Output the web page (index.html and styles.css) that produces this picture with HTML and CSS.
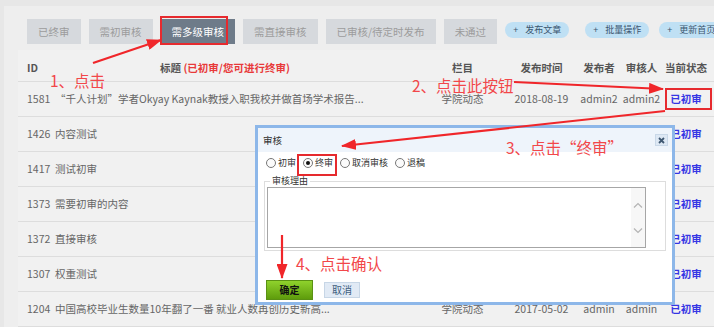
FILE: index.html
```html
<!DOCTYPE html>
<html lang="zh-CN">
<head>
  <meta charset="UTF-8">
  <meta name="viewport" content="width=device-width, initial-scale=1.0">
  <title>文章审核</title>
  <link rel="stylesheet" href="styles.css">
</head>
<body>

  <div class="panel">
    <div class="toolbar">
      <span class="tab">已终审</span>
      <span class="tab">需初审核</span>
      <span class="tab active">需多级审核</span>
      <span class="tab">需直接审核</span>
      <span class="tab">已审核/待定时发布</span>
      <span class="tab">未通过</span>
      <span class="pill">+<b>发布文章</b></span>
      <span class="pill wide">+<b>批量操作</b></span>
      <span class="pill">+<b>更新首页</b></span>
    </div>

    <div class="list">
      <div class="row head">
        <span>ID</span>
        <span class="title">标题 <em>(已初审/您可进行终审)</em></span>
        <span class="c">栏目</span>
        <span class="c">发布时间</span>
        <span class="c">发布者</span>
        <span class="c">审核人</span>
        <span class="c">当前状态</span>
      </div>
      <div class="row">
        <span>1581</span>
        <span class="title">“千人计划”学者Okyay Kaynak教授入职我校并做首场学术报告...</span>
        <span class="c">学院动态</span>
        <span class="c">2018-08-19</span>
        <span class="c">admin2</span>
        <span class="c">admin2</span>
        <span class="c state">已初审</span>
      </div>
      <!-- rows under the dialog: only the visible cells are filled -->
      <div class="row">
        <span>1426</span>
        <span class="title">内容测试</span>
        <span></span><span></span><span></span><span></span>
        <span class="c state">已初审</span>
      </div>
      <div class="row">
        <span>1417</span>
        <span class="title">测试初审</span>
        <span></span><span></span><span></span><span></span>
        <span class="c state">已初审</span>
      </div>
      <div class="row">
        <span>1373</span>
        <span class="title">需要初审的内容</span>
        <span></span><span></span><span></span><span></span>
        <span class="c state">已初审</span>
      </div>
      <div class="row">
        <span>1372</span>
        <span class="title">直接审核</span>
        <span></span><span></span><span></span><span></span>
        <span class="c state">已初审</span>
      </div>
      <div class="row">
        <span>1307</span>
        <span class="title">权重测试</span>
        <span></span><span></span><span></span><span></span>
        <span class="c state">已初审</span>
      </div>
      <div class="row">
        <span>1204</span>
        <span class="title">中国高校毕业生数量10年翻了一番 就业人数再创历史新高...</span>
        <span class="c">学院动态</span>
        <span class="c">2017-05-02</span>
        <span class="c">admin</span>
        <span class="c">admin</span>
        <span class="c state">已初审</span>
      </div>
    </div>
  </div>

  <!-- audit dialog -->
  <div class="dialog">
    <div class="dlg-title">
      审核
      <span class="close">
        <svg width="7" height="7" viewBox="0 0 7 7"><path d="M1 1L6 6M6 1L1 6" stroke="#3f5872" stroke-width="1.8"/></svg>
      </span>
    </div>
    <div class="dlg-body">
      <div class="radios">
        <label class="radio"><i></i>初审</label>
        <label class="radio on"><i></i>终审</label>
        <label class="radio"><i></i>取消审核</label>
        <label class="radio"><i></i>退稿</label>
      </div>
      <fieldset class="reason">
        <legend>审核理由</legend>
        <div class="textarea">
          <div class="scroll">
            <svg width="10" height="6" viewBox="0 0 10 6"><path d="M1 5.5L5 1.5L9 5.5" fill="none" stroke="#b4b4b4" stroke-width="1.2"/></svg>
            <svg width="10" height="6" viewBox="0 0 10 6"><path d="M1 0.5L5 4.5L9 0.5" fill="none" stroke="#b4b4b4" stroke-width="1.2"/></svg>
          </div>
        </div>
      </fieldset>
      <div class="buttons">
        <button class="ok">确定</button>
        <button class="cancel">取消</button>
      </div>
    </div>
  </div>

  <!-- tutorial marks -->
  <svg class="arrows" width="714" height="327" viewBox="0 0 714 327">
    <defs>
      <marker id="head" markerUnits="userSpaceOnUse" markerWidth="15" markerHeight="11" refX="14" refY="5.5" orient="auto">
        <path d="M0 0L15 5.5L0 11Z" fill="#f0262a"/>
      </marker>
    </defs>
    <line x1="93" y1="63" x2="161" y2="40" stroke="#f0262a" stroke-width="2.2" marker-end="url(#head)"/>
    <line x1="514" y1="82" x2="663" y2="89" stroke="#f0262a" stroke-width="2.2" marker-end="url(#head)"/>
    <line x1="665" y1="111" x2="342" y2="146" stroke="#f0262a" stroke-width="2.2" marker-end="url(#head)"/>
    <line x1="282" y1="235" x2="282" y2="278" stroke="#f0262a" stroke-width="2.2" marker-end="url(#head)"/>
  </svg>

  <div class="note n1">1、点击</div>
  <div class="note n2">2、点击此按钮</div>
  <div class="note n3">3、点击“终审”</div>
  <div class="note n4">4、点击确认</div>

  <div class="mark m1"></div>
  <div class="mark m2"></div>
  <div class="mark m3"></div>

</body>
</html>
```

FILE: styles.css
```css
body {
  margin: 0;
  width: 714px;
  height: 327px;
  overflow: hidden;
  position: relative;
  background-color: #e7e7e7;
  font-family: "Noto Sans CJK SC", "Open Sans", sans-serif;
  font-size: 10.5px;
  color: #666;
}

.panel {
  margin: 6px 0 0 4px;
  height: 321px;
  background-color: #eeeeee;
}

/* tabs */
.toolbar {
  display: flex;
  align-items: flex-start;
  height: 44px;
  padding: 13px 0 0 23px;
  box-sizing: border-box;
}
.tab {
  height: 25px;
  line-height: 25px;
  padding: 0 11px;
  margin-right: 8px;
  background-color: #d6d9dd;
  color: #9c9c9c;
  white-space: nowrap;
}
.tab.active {
  background-color: #6e7b89;
  color: #fff;
}
.pill {
  margin-top: 3px;
  height: 16px;
  line-height: 16px;
  padding: 0 8px;
  border-radius: 8px;
  background-color: #bfe0f4;
  color: #3b5670;
  font-size: 9px;
  white-space: nowrap;
}
.pill b {
  font-weight: normal;
  margin-left: 7px;
}
.pill.wide {
  margin: 3px 10px 0 16px;
}

/* list */
.list {
  margin-left: 14px;
  background-color: #f1f1f1;
}
.row {
  display: grid;
  grid-template-columns: 28px 365px 85px 73px 42px 43px 46px;
  align-items: center;
  padding-left: 9px;
  height: 35px;
  line-height: 14px;
  border-bottom: 1px solid #dddddd;
  box-sizing: border-box;
  white-space: nowrap;
}
.row.head {
  height: 32px;
  padding-top: 4px;
  font-weight: bold;
  color: #555;
}
.row.head .title {
  padding-left: 105px;
}
.row.head em {
  font-style: normal;
  color: #e8393a;
}
.row .c {
  text-align: center;
}
.row .state {
  color: #3636e4;
  font-weight: bold;
}

/* dialog */
.dialog {
  position: absolute;
  left: 255px;
  top: 125px;
  width: 420px;
  height: 180px;
  border: 3px solid #8db7e9;
  box-sizing: border-box;
  background-color: #fff;
  font-size: 9px;
  color: #333;
}
.dlg-title {
  position: relative;
  height: 24px;
  line-height: 24px;
  padding-left: 5px;
  background-color: #eef4fb;
  font-size: 9.5px;
}
.close {
  position: absolute;
  right: 4px;
  top: 6px;
  width: 13px;
  height: 12px;
  display: flex;
  align-items: center;
  justify-content: center;
  background-color: #dde8f4;
  border: 1px solid #c9d8e8;
  box-sizing: border-box;
}
.dlg-body {
  padding: 0 6px;
}
.radios {
  display: flex;
  align-items: center;
  height: 18px;
  margin-top: 2px;
  padding-left: 2px;
}
.radio {
  display: flex;
  align-items: center;
  margin-right: 7px;
  line-height: 18px;
}
.radio i {
  position: relative;
  width: 10px;
  height: 10px;
  margin-right: 2px;
  border: 1px solid #777;
  border-radius: 50%;
  box-sizing: border-box;
  background-color: #fbfbfb;
}
.radio.on i::after {
  content: "";
  position: absolute;
  left: 2px;
  top: 2px;
  width: 4px;
  height: 4px;
  border-radius: 50%;
  background-color: #111;
}
.reason {
  margin: 3px 0 0;
  padding: 0 19px 2px 2px;
  border: 1px solid #dddddd;
}
.reason legend {
  margin-left: 3px;
  padding: 0 2px;
  line-height: 12px;
}
.textarea {
  display: flex;
  justify-content: flex-end;
  height: 61px;
  border: 1px solid #a6a6a6;
  box-sizing: border-box;
}
.scroll {
  width: 14px;
  display: flex;
  flex-direction: column;
  align-items: center;
  justify-content: space-between;
  padding: 14px 0 13px;
  background-color: #f7f7f7;
}
.buttons {
  display: flex;
  align-items: center;
  margin-top: 29px;
  padding-left: 2px;
}
.buttons button {
  font-family: "Noto Sans CJK SC", sans-serif;
  font-size: 10px;
  padding: 0;
  line-height: 14px;
}
.ok {
  width: 47px;
  height: 20px;
  border: 1px solid #5a9114;
  background: linear-gradient(#8fd22c, #5e9c0c);
  font-weight: bold;
  color: #111;
}
.cancel {
  width: 36px;
  height: 16px;
  margin-left: 11px;
  border: 1px solid #c7d6e6;
  background-color: #e1eaf5;
  color: #3d5d80;
}

/* tutorial marks */
.arrows {
  position: absolute;
  left: 0;
  top: 0;
  pointer-events: none;
}
.note {
  position: absolute;
  font-size: 15.5px;
  line-height: 16px;
  color: #f2474a;
  white-space: nowrap;
}
.n1 { left: 50px; top: 72px; }
.n2 { left: 412px; top: 77px; }
.n3 { left: 506px; top: 139px; }
.n4 { left: 296px; top: 255px; }
.mark {
  position: absolute;
  border: 2px solid #e62a2e;
  box-sizing: border-box;
}
.m1 { left: 160px; top: 16px; width: 68px; height: 29px; }
.m2 { left: 665px; top: 88px; width: 47px; height: 22px; }
.m3 { left: 297px; top: 154px; width: 40px; height: 22px; }
```
